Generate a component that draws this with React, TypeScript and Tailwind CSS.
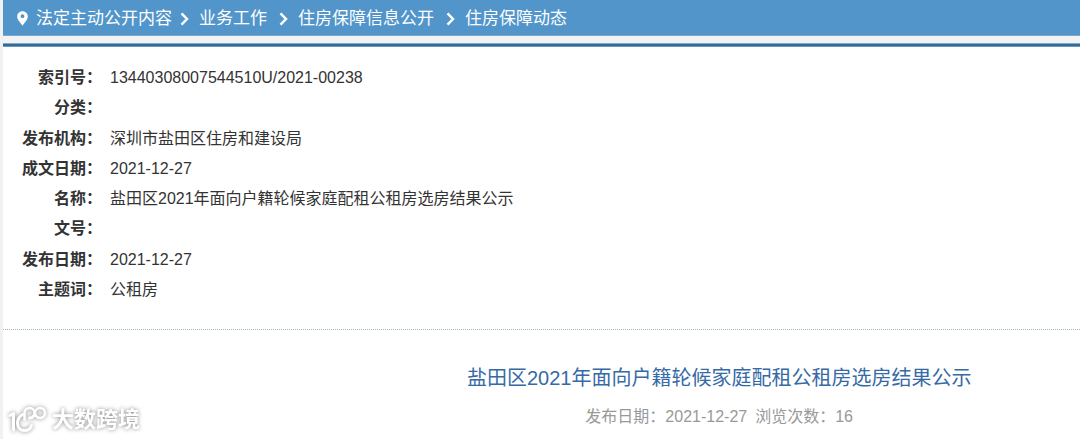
import { Fragment } from "react";

const crumbs = ["法定主动公开内容", "业务工作", "住房保障信息公开", "住房保障动态"];

const title = "盐田区2021年面向户籍轮候家庭配租公租房选房结果公示";

const fields = [
  { label: "索引号", value: "13440308007544510U/2021-00238" },
  { label: "分类", value: "" },
  { label: "发布机构", value: "深圳市盐田区住房和建设局" },
  { label: "成文日期", value: "2021-12-27" },
  { label: "名称", value: title },
  { label: "文号", value: "" },
  { label: "发布日期", value: "2021-12-27" },
  { label: "主题词", value: "公租房" },
];

function PinIcon() {
  return (
    <svg aria-hidden="true" className="mr-2 h-[15px] w-[11px] shrink-0" viewBox="0 0 11 15">
      <path
        fill="white"
        fillRule="evenodd"
        d="M5.5 0.3C2.5 0.3 0.2 2.6 0.2 5.4c0 3.4 3.2 6.1 5.3 9.3 2.1-3.2 5.3-5.9 5.3-9.3C10.8 2.6 8.5 0.3 5.5 0.3zM5.5 3.3a1.9 1.9 0 1 1 0 3.8 1.9 1.9 0 0 1 0-3.8z"
      />
    </svg>
  );
}

function Chevron() {
  return (
    <svg aria-hidden="true" className="h-[14px] w-[9px] shrink-0" viewBox="0 0 9 14">
      <path d="M1.5 1.3 7 7l-5.5 5.7" fill="none" stroke="white" strokeWidth="2.5" />
    </svg>
  );
}

function Brand() {
  return (
    <div className="absolute bottom-1 left-1 flex items-center gap-1 text-white drop-shadow-[0_0_2px_#888888]">
      <svg aria-hidden="true" className="h-[30px] w-[41px]" viewBox="0 0 41 30" fill="none" stroke="currentColor" strokeWidth="3" strokeLinecap="round" strokeLinejoin="round">
        <path d="M3 10.5 6.5 8.500V25" />
        <path d="M15.500 9.500C12.500 11.500 10.500 14.500 10.500 18c0 4.500 3 7.500 7 7.500 3.500 0 6-2 7-5" />
        <path d="M17.500 14.500V8a5 5 0 1 1 5 5" strokeWidth="2.600" />
        <path d="M22.500 13c3 0 5-2 5.500-5a5 5 0 1 1 5.500 5c-3 0-5-2-5.500-5" strokeWidth="2.600" />
      </svg>
      <span className="text-[22px] leading-[30px] font-bold">大数跨境</span>
    </div>
  );
}

export default function App() {
  return (
    <div className="relative min-h-screen border-l-[3px] border-[#f1f1f1] bg-white font-['Liberation_Sans','Noto_Sans_CJK_SC',sans-serif] text-[#333333]">
      <nav aria-label="当前位置" className="flex h-9 items-center border-b border-[#7fa9cb] bg-[#5195ca] pt-[2px] pl-[14px] text-[17px] text-white">
        <PinIcon />
        {crumbs.map((crumb, index) => (
          <Fragment key={crumb}>
            {index > 0 && (
              <span className={index === 1 ? "mr-[10px] ml-2" : "mr-[10px] ml-3"}>
                <Chevron />
              </span>
            )}
            <a href="#" className="whitespace-nowrap">
              {crumb}
            </a>
          </Fragment>
        ))}
      </nav>
      <div className="h-[7px] bg-[#f3f3f3]" />
      <main className="border-t border-[#7fa9c6]">
        <div className="h-[3px] border-b border-[#7097b5] bg-[#2f6b9b]" />
        <dl className="grid h-[283px] auto-rows-fr border-b border-dotted border-[#9dbccb] pt-4 pb-6 text-base">
          {fields.map((field) => (
            <div key={field.label} className="flex items-center">
              <dt className="w-[99px] shrink-0 text-right font-bold">{field.label}：</dt>
              <dd className="ml-2">{field.value}</dd>
            </div>
          ))}
        </dl>
        <article className="pt-8 pl-[33%] text-center">
          <h1 className="text-xl leading-8 text-[#366aa6]">{title}</h1>
          <p className="mt-[11px] flex justify-center gap-2 text-base text-[#999999]">
            <span>发布日期：2021-12-27</span>
            <span>浏览次数：16</span>
          </p>
        </article>
      </main>
      <Brand />
    </div>
  );
}
